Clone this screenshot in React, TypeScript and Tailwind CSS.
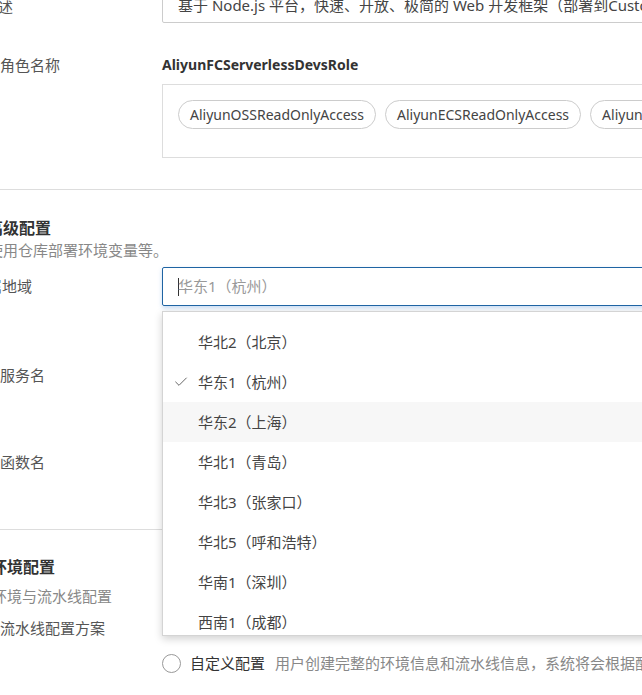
import { Check } from "lucide-react"

const regions = [
  "华北2（北京）",
  "华东1（杭州）",
  "华东2（上海）",
  "华北1（青岛）",
  "华北3（张家口）",
  "华北5（呼和浩特）",
  "华南1（深圳）",
  "西南1（成都）",
]

const policies = ["AliyunOSSReadOnlyAccess", "AliyunECSReadOnlyAccess", "AliyunFCReadOnlyAccess"]

export default function App() {
  const selected = "华东1（杭州）"
  const hovered = "华东2（上海）"

  return (
    <div className="relative w-[642px] h-[695px] overflow-hidden bg-white text-[15px] text-[#333] font-['Noto_Sans','Noto_Sans_CJK_SC',sans-serif]">
      {/* 基本信息 */}
      <div className="flex">
        <div className="w-[162px] shrink-0 text-[#555] leading-[20px] -mt-[3px]">
          <span className="-ml-[17px]">描述</span>
        </div>
        <div className="w-[560px] shrink-0 -mt-[12px] h-[35px] border border-[#ccc] rounded-[2px] flex items-center px-[15px] text-[#444] whitespace-nowrap overflow-hidden">
          基于 Node.js 平台，快速、开放、极简的 Web 开发框架（部署到Custom Runtime）
        </div>
      </div>

      <div className="flex mt-[31px]">
        <div className="w-[162px] shrink-0 text-[#555] leading-[22px]">角色名称</div>
        <div className="w-[560px] shrink-0">
          <div className="font-bold text-[14px] leading-[22px] text-[#333]">AliyunFCServerlessDevsRole</div>
          <div className="mt-[8px] h-[74px] border border-[#ddd] px-[15px] pt-[15px] flex gap-[9px] overflow-hidden">
            {policies.map((p) => (
              <span
                key={p}
                className="h-[29px] px-[11px] rounded-full border border-[#ccc] flex items-center text-[14px] text-[#444] whitespace-nowrap shrink-0"
              >
                {p}
              </span>
            ))}
          </div>
        </div>
      </div>

      <div className="mt-[31px] border-t border-[#ddd]" />

      {/* 高级配置 */}
      <div className="pt-[27px]">
        <div className="font-bold text-[16px] leading-[22px] text-[#333]">
          <span className="-ml-[13px]">高级配置</span>
        </div>
        <div className="leading-[20px] text-[#888] mt-[1px]">
          <span className="-ml-[12px]">使用仓库部署环境变量等。</span>
        </div>
      </div>

      <div className="flex mt-[7px]">
        <div className="w-[162px] shrink-0 h-[39px] flex items-center text-[#555]">
          <span className="-ml-[13px]">属地域</span>
        </div>
        <div className="w-[560px] shrink-0 h-[39px] border border-[#1f64a3] rounded-[2px] shadow-[0_2px_4px_rgba(90,150,220,0.35)] flex items-center px-[15px] text-[#999]">
          <span className="w-px h-[18px] bg-[#333] -mr-px" />
          {selected}
        </div>
      </div>

      <div className="flex mt-[59px]">
        <div className="w-[162px] shrink-0 h-[20px] leading-[20px] text-[#555]">服务名</div>
      </div>
      <div className="flex mt-[67px]">
        <div className="w-[162px] shrink-0 h-[20px] leading-[20px] text-[#555]">函数名</div>
      </div>

      <div className="mt-[57px] border-t border-[#ddd]" />

      {/* 环境配置 */}
      <div className="pt-[26px]">
        <div className="font-bold text-[16px] leading-[22px] text-[#333]">
          <span className="-ml-[9px]">环境配置</span>
        </div>
        <div className="leading-[20px] text-[#888] mt-[8px]">
          <span className="-ml-[8px]">环境与流水线配置</span>
        </div>
      </div>
      <div className="flex mt-[12px]">
        <div className="w-[162px] shrink-0 leading-[20px] text-[#555]">流水线配置方案</div>
      </div>
      <div className="flex mt-[15px]">
        <div className="w-[162px] shrink-0" />
        <div className="flex items-center h-[20px] whitespace-nowrap">
          <span className="w-[19px] h-[19px] rounded-full border border-[#999] bg-white shrink-0" />
          <span className="ml-[9px] text-[#333]">自定义配置</span>
          <span className="ml-[10px] text-[#888]">用户创建完整的环境信息和流水线信息，系统将会根据配置进行部署</span>
        </div>
      </div>

      {/* 地域下拉菜单 */}
      <div className="absolute left-[162px] top-[311px] w-[560px] h-[325px] bg-white border border-[#d4d4d4] shadow-[0_3px_8px_rgba(0,0,0,0.18)] overflow-hidden pt-[10px]">
        {regions.map((r) => (
          <div
            key={r}
            className={`h-[40px] flex items-center ${r === hovered ? "bg-[#f7f7f7]" : ""}`}
          >
            <span className="w-[35px] shrink-0 flex justify-end pr-[9px]">
              {r === selected && <Check className="w-[16px] h-[16px] text-[#666]" strokeWidth={1.5} />}
            </span>
            <span className="text-[#444]">{r}</span>
          </div>
        ))}
      </div>
    </div>
  )
}
